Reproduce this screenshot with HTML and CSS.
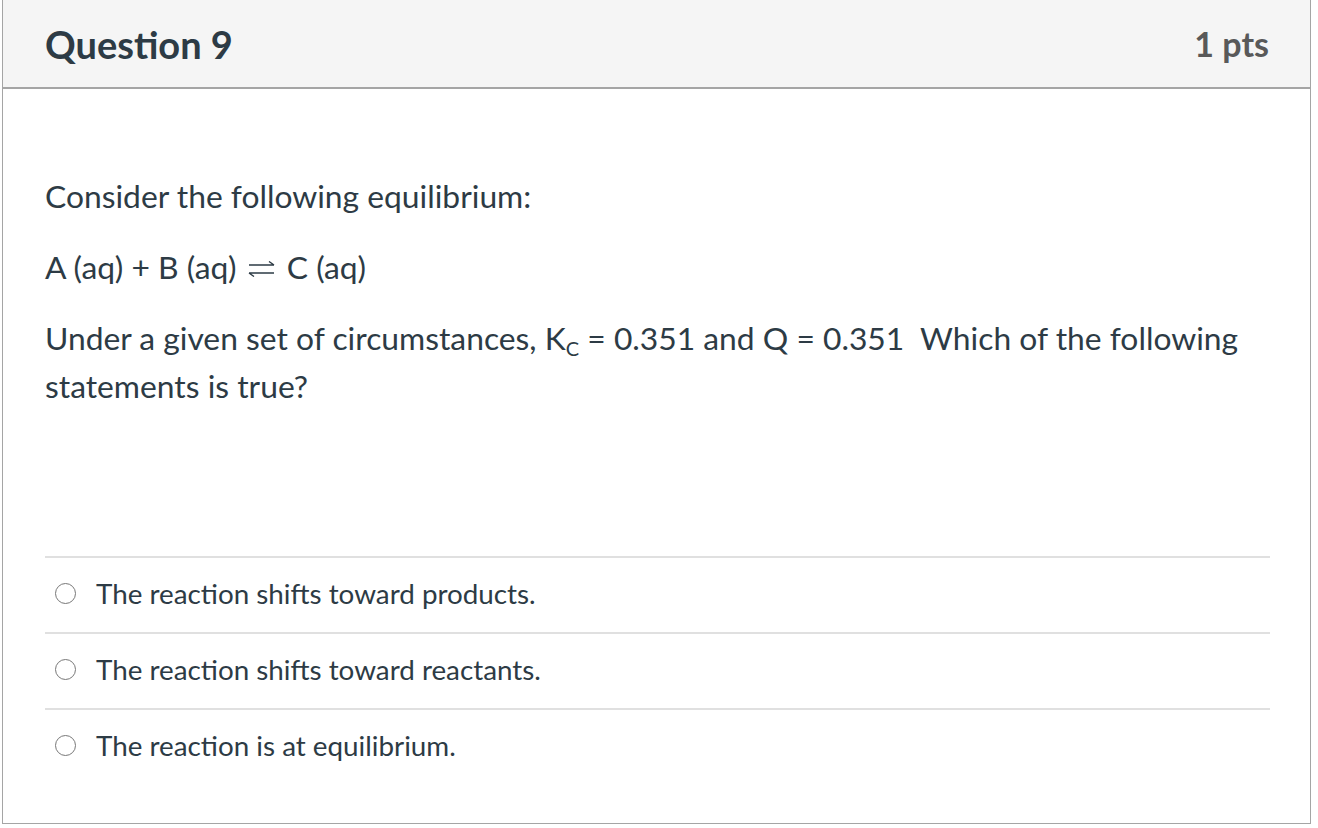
FILE: index.html
```html
<!DOCTYPE html>
<html>
<head>
<meta charset="utf-8">
<link rel="stylesheet" href="styles.css">
</head>
<body>
<div class="page">
  <div class="card">
    <div class="header">
      <div class="title">Question 9</div>
      <div class="pts">1 pts</div>
    </div>
    <div class="content">
      <div class="question">
        <p class="para">Consider the following equilibrium:</p>
        <p class="para">A (aq) + B (aq) <svg class="eq" width="28" height="16" viewBox="0 0 28 16"><path d="M1 4H26M21 0.5L26 4M1 12H26M1 12L6 15.5" fill="none" stroke="#2d3b45" stroke-width="1.4"/></svg> C (aq)</p>
        <p class="para">Under a given set of circumstances, K<sub>C</sub> = 0.351 and Q = 0.351&nbsp; Which of the following statements is true?</p>
      </div>
      <div class="answers">
        <div class="answer"><span class="radio"></span><span>The reaction shifts toward products.</span></div>
        <div class="answer"><span class="radio"></span><span>The reaction shifts toward reactants.</span></div>
        <div class="answer"><span class="radio"></span><span>The reaction is at equilibrium.</span></div>
      </div>
    </div>
  </div>
</div>
</body>
</html>
```

FILE: styles.css
```css
html, body {
  margin: 0;
  padding: 0;
  background: #fff;
}
body {
  font-family: Lato, "Liberation Sans", sans-serif;
  color: #2d3b45;
}
.page {
  padding: 0 7px 0 2px;
}
.card {
  border: 1px solid #a5a5a5;
  border-top: 0;
  height: 824px;
  box-sizing: border-box;
  display: flex;
  flex-direction: column;
}
.header {
  background: #f5f5f5;
  border-bottom: 2px solid #a5a5a5;
  height: 89px;
  box-sizing: border-box;
  display: flex;
  align-items: center;
  justify-content: space-between;
  padding: 0 41px 0 42px;
}
.title {
  font-size: 38px;
  font-weight: 700;
  color: #2d3b45;
}
.pts {
  font-size: 34px;
  font-weight: 700;
  color: #595959;
}
.content {
  padding: 83px 40px 0 42px;
}
.para {
  margin: 0 0 23px;
  font-size: 31.8px;
  line-height: 48px;
}
.eq {
  vertical-align: 2px;
  margin: 0 3px 0 3px;
}
sub {
  font-size: 20px;
  vertical-align: -6px;
  line-height: 0;
}
.answers {
  margin-top: 146px;
}
.answer {
  border-top: 2px solid #e0e0e0;
  height: 76px;
  box-sizing: border-box;
  display: flex;
  align-items: center;
  font-size: 27.8px;
  padding: 0 0 4px 10px;
}
.radio {
  width: 21px;
  height: 21px;
  border: 1.5px solid #777;
  border-radius: 50%;
  box-sizing: border-box;
  margin-right: 20px;
  flex: none;
}
```
